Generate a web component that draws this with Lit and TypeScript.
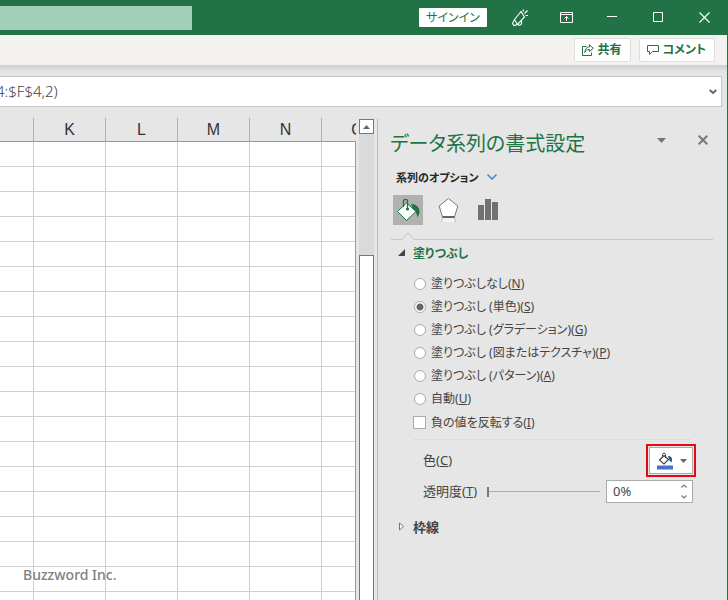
import { LitElement, html, css } from "lit";
import { customElement, state } from "lit/decorators.js";

const COLUMNS = ["", "K", "L", "M", "N", "O"];
const ROWS = Array.from({ length: 60 }, (_, i) => i);

const FILLS = [
  { id: "none", text: "塗りつぶしなし", key: "N" },
  { id: "solid", text: "塗りつぶし (単色)", key: "S" },
  { id: "gradient", text: "塗りつぶし (グラデーション)", key: "G" },
  { id: "picture", text: "塗りつぶし (図またはテクスチャ)", key: "P" },
  { id: "pattern", text: "塗りつぶし (パターン)", key: "A" },
  { id: "auto", text: "自動", key: "U" },
];

const shared = css`
  :host {
    display: block;
    box-sizing: border-box;
  }
  * {
    box-sizing: border-box;
  }
  button,
  input {
    font: inherit;
    font-feature-settings: inherit;
    color: inherit;
    margin: 0;
    padding: 0;
    border: 0;
    background: none;
    border-radius: 0;
  }
  svg {
    display: block;
    flex: none;
  }
`;

@customElement("title-bar")
export class TitleBar extends LitElement {
  static styles = [
    shared,
    css`
      .bar {
        display: flex;
        align-items: center;
        height: 35px;
        padding-right: 1px;
        background: #217346;
        color: #fff;
      }
      .search {
        width: 192px;
        height: 24px;
        background: #a1cfb7;
      }
      .space {
        flex: 1;
      }
      .signin {
        width: 68px;
        height: 19px;
        margin-right: 10px;
        background: #fff;
        color: #217346;
        font-size: 12px;
        line-height: 19px;
        border-radius: 1px;
      }
      .tool {
        display: flex;
        align-items: center;
        justify-content: center;
        width: 46px;
        height: 35px;
      }
    `,
  ];

  render() {
    return html`
      <header class="bar">
        <input class="search" type="search" aria-label="検索" />
        <div class="space"></div>
        <button class="signin">サインイン</button>
        <button class="tool" aria-label="機能">
          <svg width="18" height="18" viewBox="0 0 18 18" fill="none" stroke="#fff" stroke-width="1.1">
            <path d="M10 2.500 3.500 10.500 1.500 14.500 3 16.500 6.500 15.500 13.500 8 10 2.500ZM3.500 10.500 6.500 15.500M7 15C8 17.500 11.500 16 10.500 11.500" />
            <path d="M12 2.500 12.500 .5M13.500 4.500 16.500 1.500M14.500 6.500 17 6.500" />
          </svg>
        </button>
        <button class="tool" aria-label="リボンの表示オプション">
          <svg width="13" height="11" viewBox="0 0 13 11" fill="none" stroke="#fff">
            <path d="M.5 .5H12.500V10.500H.5ZM.5 2.500H12.500M6.500 9V4.500M4.500 6.500 6.500 4.500 8.500 6.500" />
          </svg>
        </button>
        <button class="tool" aria-label="最小化">
          <svg width="10" height="11" viewBox="0 0 10 11" stroke="#fff"><path d="M0 4.500H10" /></svg>
        </button>
        <button class="tool" aria-label="最大化">
          <svg width="10" height="11" viewBox="0 0 10 11" fill="none" stroke="#fff"><path d="M.5 .5H9.500V9.500H.5Z" /></svg>
        </button>
        <button class="tool" aria-label="閉じる">
          <svg width="11" height="11" viewBox="0 0 11 11" stroke="#fff" stroke-width="1.1"><path d="M.5 .5 10.500 10.500M10.500 .5 .5 10.500" /></svg>
        </button>
      </header>
    `;
  }
}

@customElement("command-bar")
export class CommandBar extends LitElement {
  static styles = [
    shared,
    css`
      .ribbon {
        display: flex;
        justify-content: flex-end;
        align-items: center;
        gap: 8px;
        height: 30px;
        padding-right: 12px;
        background: #f3f2f1;
      }
      .cmd {
        display: flex;
        align-items: center;
        gap: 4px;
        height: 24px;
        padding: 0 8px 0 7px;
        border: 1px solid #e1dfdd;
        border-radius: 2px;
        background: #fff;
        color: #217346;
        font-size: 13px;
        font-size: 12px;
        line-height: 22px;
        font-weight: 700;
      }
      .shade {
        height: 11px;
        background: linear-gradient(#cfcdcd, #e6e6e6 7px);
      }
      .formula {
        display: flex;
        align-items: center;
        height: 31px;
        margin-right: 5px;
        padding-right: 4px;
        border: 1px solid #c6c6c6;
        border-left: 0;
        background: #fff;
      }
      .text {
        flex: 1;
        min-width: 0;
        height: 29px;
        padding-bottom: 2px;
        text-indent: -4px;
        font-family: "Noto Sans", "Noto Sans CJK JP", sans-serif;
        font-size: 15px;
        font-weight: 300;
        color: #444;
      }
    `,
  ];

  render() {
    return html`
      <div class="ribbon">
        <button class="cmd">
          <svg width="12" height="12" viewBox="0 0 12 12" fill="none" stroke="#217346">
            <path d="M4.500 2.500H.5V11.500H9.500V8.500M7.500 .8 11.300 4.300 7.500 7.500V5.500C5 5.500 3.800 6.500 2.800 8.500 3 5 4.500 3.200 7.500 2.800Z" />
          </svg>
          <span>共有</span>
        </button>
        <button class="cmd">
          <svg width="12" height="12" viewBox="0 0 12 12" fill="none" stroke="#217346">
            <path d="M.5 1.500H11.500V7.500H5.500L2.500 10.500V7.500H.5Z" />
          </svg>
          <span>コメント</span>
        </button>
      </div>
      <div class="shade"></div>
      <div class="formula">
        <input class="text" aria-label="数式バー" value="4:$F$4,2)" />
        <button aria-label="数式バーの展開">
          <svg width="8" height="6" viewBox="0 0 8 6" fill="none" stroke="#666" stroke-width="2"><path d="M.7 1 4 4 7.300 1" /></svg>
        </button>
      </div>
    `;
  }
}

@customElement("sheet-grid")
export class SheetGrid extends LitElement {
  static styles = [
    shared,
    css`
      :host {
        display: flex;
        min-width: 0;
        min-height: 0;
      }
      .sheet {
        position: relative;
        flex: 1;
        min-width: 0;
        overflow: hidden;
      }
      .sheet::after {
        content: "";
        position: absolute;
        top: 24px;
        right: 0;
        bottom: 0;
        border-right: 1px solid #999;
      }
      table {
        table-layout: fixed;
        width: 394px;
        border-collapse: separate;
        border-spacing: 0;
      }
      .lead {
        width: 34px;
      }
      th {
        height: 24px;
        padding: 0;
        border-right: 1px solid #b1b1b1;
        border-bottom: 1px solid #999;
        font-family: "Liberation Sans", sans-serif;
        font-size: 16px;
        font-weight: 400;
        line-height: 22px;
        color: #333;
      }
      td {
        height: 25px;
        padding: 0;
        border-right: 1px solid #d0d0d0;
        border-bottom: 1px solid #d0d0d0;
        background: #fff;
      }
      .mark {
        position: absolute;
        left: 23px;
        bottom: 15px;
        font-family: "Noto Sans", sans-serif;
        font-size: 14px;
        line-height: 20px;
        font-weight: 500;
        color: #808080;
      }
      .scroll {
        display: flex;
        flex-direction: column;
        width: 15px;
        margin: 1px 3px 0 3px;
        background: #dadada;
      }
      .up {
        display: flex;
        align-items: center;
        justify-content: center;
        height: 15px;
        border: 1px solid #777;
        background: #fff;
      }
      .thumb {
        flex: 1;
        margin-top: 121px;
        border: 1px solid #777;
        border-bottom: 0;
        background: #fff;
      }
    `,
  ];

  render() {
    return html`
      <div class="sheet">
        <table>
          <colgroup>
            ${COLUMNS.map((c) => html`<col class=${c ? "" : "lead"} />`)}
          </colgroup>
          <thead>
            <tr>${COLUMNS.map((c) => html`<th scope="col">${c}</th>`)}</tr>
          </thead>
          <tbody>
            ${ROWS.map(() => html`<tr>${COLUMNS.map(() => html`<td></td>`)}</tr>`)}
          </tbody>
        </table>
        <div class="mark">Buzzword Inc.</div>
      </div>
      <div class="scroll">
        <button class="up" aria-label="上へスクロール">
          <svg width="7" height="4" viewBox="0 0 7 4"><path d="M0 4 3.500 0 7 4Z" fill="#666" /></svg>
        </button>
        <div class="thumb"></div>
      </div>
    `;
  }
}

@customElement("format-pane")
export class FormatPane extends LitElement {
  static styles = [
    shared,
    css`
      :host {
        border-left: 1px solid #bdbdbd;
        margin-top: 1px;
        padding: 12px 14px 0 12px;
        color: #444;
        font-size: 13px;
      }
      .top {
        display: flex;
        align-items: center;
        gap: 32px;
        height: 26px;
        padding-right: 5px;
      }
      h1 {
        flex: 1;
        margin: 0;
        color: #217346;
        font-size: 20px;
        line-height: 26px;
        font-weight: 400;
        white-space: nowrap;
      }
      .top button {
        margin-bottom: 8px;
      }
      .options {
        display: flex;
        align-items: center;
        gap: 8px;
        height: 20px;
        margin: 10px 0 8px 6px;
        color: #262626;
        font-weight: 700;
        font-size: 11px;
      }
      .tabs {
        display: flex;
        gap: 10px;
        padding-left: 3px;
      }
      .tab {
        display: flex;
        align-items: center;
        justify-content: center;
        width: 30px;
        height: 30px;
      }
      .tab.on {
        background: #b1b1b1;
      }
      .notch {
        display: flex;
        align-items: flex-end;
        height: 15px;
        margin-left: 1px;
      }
      .notch::before {
        content: "";
        width: 10px;
        border-bottom: 1px solid #c6c6c6;
      }
      .notch::after {
        content: "";
        flex: 1;
        border-bottom: 1px solid #c6c6c6;
      }
      .head {
        display: flex;
        align-items: center;
        gap: 8px;
        height: 20px;
        margin: 3px 0 0 8px;
        font-weight: 700;
      }
      .head.open {
        color: #217346;
        font-size: 12px;
      }
      .list {
        display: flex;
        flex-direction: column;
        margin: 9px 22px 0 23px;
        padding: 0 0 5px 1px;
        border-bottom: 1px solid #dcdcdc;
        font-size: 12px;
      }
      .choice {
        display: flex;
        align-items: center;
        gap: 5px;
        height: 23px;
        line-height: 23px;
        white-space: pre;
      }
      .choice.box {
        height: 24px;
        margin-left: -1px;
      }
      .choice input {
        appearance: none;
        flex: none;
        width: 12px;
        height: 12px;
        border: 1px solid #ababab;
        border-radius: 50%;
        background: #fff;
      }
      .choice input:checked {
        background: radial-gradient(circle, #666 3px, #fff 4px);
      }
      .choice.box input {
        width: 13px;
        height: 13px;
        border-radius: 0;
      }
      .row {
        display: flex;
        align-items: center;
        margin: 0 17px 0 33px;
      }
      .row.color {
        justify-content: space-between;
        margin-top: 4px;
      }
      .ring {
        border: 2px solid #e00b13;
        padding: 1px;
      }
      .pick {
        display: flex;
        align-items: center;
        justify-content: center;
        gap: 6px;
        width: 44px;
        height: 27px;
        border: 1px solid #ababab;
        background: #fff;
      }
      .row.clear {
        margin-top: 3px;
        margin-right: 20px;
      }
      .range {
        appearance: none;
        flex: 1;
        min-width: 0;
        height: 20px;
        margin: 0 6px 0 10px;
        background: linear-gradient(#ababab, #ababab) center / 100% 1px no-repeat;
      }
      .range::-webkit-slider-thumb {
        appearance: none;
        width: 2px;
        height: 10px;
        background: #777;
      }
      .amount {
        display: flex;
        width: 87px;
        height: 23px;
        border: 1px solid #ababab;
        background: #fff;
      }
      .amount input {
        flex: 1;
        min-width: 0;
        padding: 0 0 2px 6px;
      }
      .row label {
        line-height: 19px;
        padding-bottom: 1px;
      }
      .spin {
        display: flex;
        flex-direction: column;
        width: 16px;
      }
      .spin button {
        display: flex;
        flex: 1;
        align-items: center;
        justify-content: center;
      }
      .head.shut {
        margin-top: 13px;
      }
    `,
  ];

  @state() private fill = "solid";

  render() {
    return html`
      <div class="top">
        <h1>データ系列の書式設定</h1>
        <button aria-label="作業ウィンドウのオプション">
          <svg width="9" height="5" viewBox="0 0 9 5"><path d="M0 0H9L4.500 5Z" fill="#777" /></svg>
        </button>
        <button aria-label="閉じる">
          <svg width="10" height="10" viewBox="0 0 10 10" stroke="#777" stroke-width="2"><path d="M.7 .7 9.300 9.300M9.300 .7 .7 9.300" /></svg>
        </button>
      </div>
      <button class="options">
        <span>系列のオプション</span>
        <svg width="10" height="6" viewBox="0 0 10 6" fill="none" stroke="#3a87cf" stroke-width="1.500"><path d="M.5 .5 5 5 9.500 .5" /></svg>
      </button>
      <div class="tabs">
        <button class="tab on" aria-label="塗りつぶしと線">
          <svg width="24" height="24" viewBox="0 0 24 24">
            <path d="M15 6C20 6 24 9 23.500 15L21.500 19.500C20.500 15 19.500 13 17.500 12Z" fill="#217346" />
            <path d="M10.500 5 20 13.500 10.500 22.500 1.500 13.500Z" fill="#fff" stroke="#217346" />
            <path d="M7.500 9V3C7.500 .8 11.500 .8 11.500 3V11" fill="none" stroke="#217346" stroke-width="1.300" />
            <circle cx="11.500" cy="11" r="1.600" fill="#217346" />
          </svg>
        </button>
        <button class="tab" aria-label="効果">
          <svg width="22" height="26" viewBox="0 0 22 26">
            <path d="M11.500 1.500 20.800 9 17.500 20H5.500L2.200 9Z" fill="#fff" stroke="#777" />
            <path d="M5.500 20H17.500" stroke="#666" stroke-width="2" />
            <path d="M5.500 21H17.500L18.500 25H4.500Z" fill="#f3f3f3" />
            <path d="M5.500 21 4.500 25M17.500 21 18.500 25" stroke="#bbb" />
          </svg>
        </button>
        <button class="tab" aria-label="系列のオプション">
          <svg width="20" height="24" viewBox="0 0 20 24" fill="#717171"><path d="M0 7H6V22H0ZM7 1H13V22H7ZM14 4H20V22H14Z" /></svg>
        </button>
      </div>
      <div class="notch">
        <svg width="14" height="8" viewBox="0 0 14 8" fill="none" stroke="#c6c6c6"><path d="M0 7.500H1L7 .7 13 7.500H14" /></svg>
      </div>
      <button class="head open" aria-expanded="true">
        <svg width="7" height="9" viewBox="0 0 7 9"><path d="M7 0V7H0Z" fill="#444" /></svg>
        <span>塗りつぶし</span>
      </button>
      <div class="list">
        ${FILLS.map(
          (f) => html`<label class="choice"
            ><input
              type="radio"
              name="fill"
              .checked=${this.fill === f.id}
              @change=${() => (this.fill = f.id)}
            /><span>${f.text}(<u>${f.key}</u>)</span></label
          >`
        )}
        <label class="choice box"><input type="checkbox" /><span>負の値を反転する(<u>I</u>)</span></label>
      </div>
      <div class="row color">
        <label for="pick">色(<u>C</u>)</label>
        <div class="ring">
          <button class="pick" id="pick">
            <svg width="18" height="18" viewBox="0 0 18 18">
              <path d="M12 4C15.500 4 17 6.500 15.500 10.500L13.500 8.500Z" fill="#1e5c99" />
              <path d="M8 3.500 12.500 7.500 8 12 3.500 8Z" fill="#fff" stroke="#444" stroke-width="1.200" />
              <path d="M6.500 5.500V2.500C6.500 .8 9.500 .8 9.500 2.500V6" fill="none" stroke="#444" />
              <path d="M1 13.500H17V17.500H1Z" fill="#4472c4" />
            </svg>
            <svg width="7" height="4" viewBox="0 0 7 4"><path d="M0 0H7L3.500 4Z" fill="#666" /></svg>
          </button>
        </div>
      </div>
      <div class="row clear">
        <label for="range">透明度(<u>T</u>)</label>
        <input class="range" id="range" type="range" min="0" max="100" value="0" />
        <div class="amount">
          <input aria-label="透明度の値" value="0%" />
          <div class="spin">
            <button aria-label="増やす">
              <svg width="6" height="4" viewBox="0 0 6 4" fill="none" stroke="#777" stroke-width="1.200"><path d="M.5 3.500 3 1 5.500 3.500" /></svg>
            </button>
            <button aria-label="減らす">
              <svg width="6" height="4" viewBox="0 0 6 4" fill="none" stroke="#777" stroke-width="1.200"><path d="M.5 .5 3 3 5.500 .5" /></svg>
            </button>
          </div>
        </div>
      </div>
      <button class="head shut" aria-expanded="false">
        <svg width="7" height="9" viewBox="0 0 7 9"><path d="M1.500 1 5.500 4.500 1.500 8Z" fill="#fff" stroke="#777" /></svg>
        <span>枠線</span>
      </button>
    `;
  }
}

@customElement("app-root")
export class AppRoot extends LitElement {
  static styles = css`
    :host {
      display: flex;
      flex-direction: column;
      height: 100vh;
      overflow: hidden;
      background: #e6e6e6;
      font-family: "Noto Sans", "Noto Sans CJK JP", sans-serif;
      font-feature-settings: "palt";
    }
    .body {
      display: flex;
      flex-direction: column;
      flex: 1;
      min-height: 0;
      border-right: 1px solid #217346;
    }
    .work {
      display: grid;
      grid-template-columns: minmax(0, 1fr) 350px;
      flex: 1;
      min-height: 0;
      margin-top: 11px;
    }
  `;

  render() {
    return html`
      <title-bar></title-bar>
      <div class="body">
        <command-bar></command-bar>
        <main class="work">
          <sheet-grid></sheet-grid>
          <format-pane></format-pane>
        </main>
      </div>
    `;
  }
}
